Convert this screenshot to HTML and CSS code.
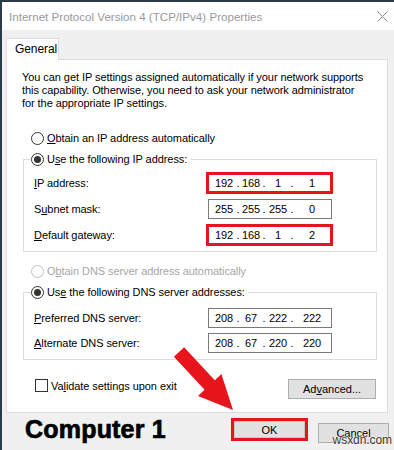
FILE: index.html
```html
<!DOCTYPE html>
<html lang="en">
<head>
  <meta charset="UTF-8">
  <meta name="viewport" content="width=device-width, initial-scale=1.0">
  <title>Internet Protocol Version 4 (TCP/IPv4) Properties</title>
  <link rel="stylesheet" href="styles.css">
</head>
<body>
  <div class="window">
    <div class="titlebar">
      <span class="title">Internet Protocol Version 4 (TCP/IPv4) Properties</span>
      <svg class="close" width="11" height="11" viewBox="0 0 11 11">
        <path d="M0.5 0.5 L10.5 10.5 M10.5 0.5 L0.5 10.5" stroke="#8a8a8a" stroke-width="1" fill="none"/>
      </svg>
    </div>

    <div class="content">
      <div class="tabs">
        <div class="tab">General</div>
      </div>

      <div class="panel">
        <p class="intro">You can get IP settings assigned automatically if your network supports<br>this capability. Otherwise, you need to ask your network administrator<br>for the appropriate IP settings.</p>

        <div class="option">
          <span class="radio"></span><span><u>O</u>btain an IP address automatically</span>
        </div>

        <fieldset class="group">
          <legend class="option"><span class="radio on"></span><span>U<u>s</u>e the following IP address:</span></legend>
          <div class="row">
            <span class="lbl"><u>I</u>P address:</span>
            <div class="field hl"><span>192</span><i>.</i><span>168</span><i>.</i><span>1</span><i>.</i><span>1</span></div>
          </div>
          <div class="row">
            <span class="lbl">S<u>u</u>bnet mask:</span>
            <div class="field"><span>255</span><i>.</i><span>255</span><i>.</i><span>255</span><i>.</i><span>0</span></div>
          </div>
          <div class="row">
            <span class="lbl"><u>D</u>efault gateway:</span>
            <div class="field hl"><span>192</span><i>.</i><span>168</span><i>.</i><span>1</span><i>.</i><span>2</span></div>
          </div>
        </fieldset>

        <div class="option option-dns disabled">
          <span class="radio"></span><span>O<u>b</u>tain DNS server address automatically</span>
        </div>

        <fieldset class="group group-dns">
          <legend class="option"><span class="radio on"></span><span>Us<u>e</u> the following DNS server addresses:</span></legend>
          <div class="row">
            <span class="lbl"><u>P</u>referred DNS server:</span>
            <div class="field"><span>208</span><i>.</i><span>67</span><i>.</i><span>222</span><i>.</i><span>222</span></div>
          </div>
          <div class="row">
            <span class="lbl"><u>A</u>lternate DNS server:</span>
            <div class="field"><span>208</span><i>.</i><span>67</span><i>.</i><span>220</span><i>.</i><span>220</span></div>
          </div>
        </fieldset>

        <div class="panel-foot">
          <div class="check-row">
            <span class="check"></span><span>Va<u>l</u>idate settings upon exit</span>
          </div>
          <button class="btn btn-adv">Ad<u>v</u>anced...</button>
        </div>
      </div>

      <div class="footer">
        <span class="computer">Computer 1</span>
        <div class="ok-box"><button class="btn btn-ok">OK</button></div>
        <button class="btn btn-cancel">Cancel</button>
      </div>
    </div>

    <svg class="arrow" width="394" height="450" viewBox="0 0 394 450">
      <polygon points="184.1,347.2 214.8,380.2 221.4,374.1 233,410 198,395.9 204.6,389.8 173.9,356.8" fill="#e8141c"/>
    </svg>
    <span class="watermark">wsxdn.com</span>
  </div>
</body>
</html>
```

FILE: styles.css
```css
:root {
  --face: #f0f0f0;
  --white: #ffffff;
  --frame: #2d3a48;
  --line: #dcdcdc;
  --field-border: #7a7a7a;
  --red: #e3151d;
  --text: #000000;
  --muted: #9a9a9a;
}

body {
  margin: 0;
  padding: 0;
  font-family: 'Liberation Sans', Arial, sans-serif;
  font-size: 11px;
  letter-spacing: -0.07px;
  color: var(--text);
  overflow: hidden;
}

.window {
  position: relative;
  width: 394px;
  height: 450px;
  box-sizing: border-box;
  background: var(--face);
  border-top: 2px solid var(--frame);
  border-left: 2px solid var(--frame);
  overflow: hidden;
}

.titlebar {
  height: 28px;
  background: var(--white);
  display: flex;
  align-items: center;
  padding: 0 0 0 7px;
}

.title {
  font-size: 11.6px;
  letter-spacing: 0;
  color: var(--muted);
  flex: 1;
}

.close {
  margin-right: 6px;
}

.tabs {
  display: flex;
  padding: 8px 0 0 4px;
}

.tab {
  position: relative;
  z-index: 1;
  width: 53px;
  height: 22px;
  box-sizing: border-box;
  margin-bottom: -1px;
  padding: 3px 0 0 8px;
  background: var(--white);
  border: 1px solid var(--line);
  border-bottom: none;
  font-size: 12px;
}

.panel {
  margin-left: 4px;
  width: 382px;
  height: 354px;
  box-sizing: border-box;
  padding: 11px 10px 0 16px;
  background: var(--white);
  border: 1px solid var(--line);
}

.intro {
  margin: 0 0 0 -1px;
  line-height: 13px;
  white-space: nowrap;
}

.option {
  display: flex;
  align-items: center;
  height: 13px;
  line-height: 13px;
  margin: 22px 0 0 8px;
}

.radio {
  width: 13px;
  height: 13px;
  box-sizing: border-box;
  border: 1px solid #333;
  border-radius: 50%;
  margin-right: 3px;
  display: inline-flex;
  align-items: center;
  justify-content: center;
  background: var(--white);
}

.radio.on::after {
  content: '';
  width: 7px;
  height: 7px;
  border-radius: 50%;
  background: #333;
}

.disabled {
  color: #a6a6a6;
}

.disabled .radio {
  border-color: #bfbfbf;
}

.group {
  margin: 8px 0 0;
  padding: 4px 0 3px;
  border: 1px solid var(--line);
  min-width: 0;
}

.group legend.option {
  margin: 0 0 0 7px;
  padding: 0 3px 0 0;
}

.row {
  display: flex;
  align-items: center;
  height: 26px;
  padding-left: 10px;
}

.group-dns {
  padding: 6px 0 4px;
}

.group-dns .row {
  height: 25px;
}

.option-dns {
  margin-top: 13px;
}

.lbl {
  width: 174px;
}

.field {
  width: 124px;
  height: 20px;
  box-sizing: border-box;
  border: 1px solid var(--field-border);
  background: var(--white);
  padding-left: 3px;
  display: flex;
  align-items: center;
}

.field.hl {
  width: 127px;
  height: 22px;
  margin-left: -2px;
  border: 3px solid var(--red);
}

.field span {
  text-align: center;
}

.field span:nth-of-type(1) { width: 24px; }
.field span:nth-of-type(2) { width: 22px; }
.field span:nth-of-type(3) { width: 24px; }
.field span:nth-of-type(4) { width: 36px; }

.field i {
  font-style: normal;
  width: 4px;
  text-align: center;
}

.panel-foot {
  display: flex;
  align-items: flex-start;
  justify-content: space-between;
  margin-top: 19px;
}

.check-row {
  display: flex;
  align-items: center;
  height: 13px;
  margin-left: 12px;
}

.check {
  width: 13px;
  height: 13px;
  box-sizing: border-box;
  border: 1px solid #333;
  margin-right: 3px;
}

.btn {
  font-family: inherit;
  font-size: 11px;
  color: var(--text);
  background: #e1e1e1;
  border: 1px solid #adadad;
  padding: 0;
  height: 20px;
}

.btn-adv {
  width: 88px;
  margin-right: 1px;
}

.footer {
  display: flex;
  align-items: flex-start;
  padding: 0 5px 0 23px;
}

.computer {
  margin-top: 4px;
  font-size: 25px;
  line-height: 25px;
  font-weight: 700;
  letter-spacing: 0.2px;
  -webkit-text-stroke: 0.7px #000;
}

.ok-box {
  margin: 5px 0 0 auto;
  width: 77px;
  height: 23px;
  box-sizing: border-box;
  border: 3px solid var(--red);
  display: flex;
}

.btn-ok {
  width: 100%;
  height: 100%;
  border-color: #c8c8c8;
}

.btn-cancel {
  width: 71px;
  margin: 10px 0 0 10px;
}

.arrow {
  position: absolute;
  left: -2px;
  top: -2px;
  pointer-events: none;
}

.watermark {
  position: absolute;
  right: 2px;
  bottom: 3px;
  font-size: 12px;
  color: #3a3a3a;
  text-shadow: 0 0 2px #fff, 0 0 2px #fff;
}
```
